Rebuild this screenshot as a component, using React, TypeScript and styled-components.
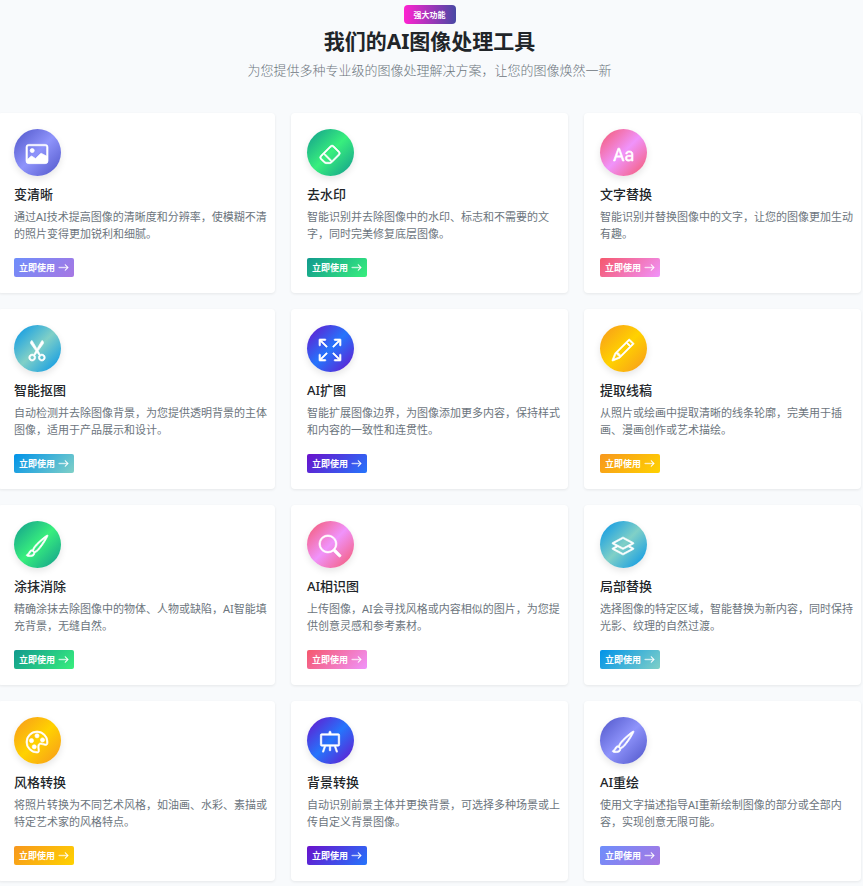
import React from "react";
import styled, { createGlobalStyle } from "styled-components";
import {
  BsArrowRight,
  BsArrowsFullscreen,
  BsBrush,
  BsEasel,
  BsEraser,
  BsImage,
  BsLayers,
  BsPalette,
  BsPencil,
  BsScissors,
  BsSearch,
  BsType,
} from "react-icons/bs";
import type { IconType } from "react-icons";

const GlobalStyle = createGlobalStyle`
  *, *::before, *::after { box-sizing: border-box; }
  body {
    margin: 0;
    background: #f8fafc;
    color: #212529;
    font-family: "Noto Sans", "Noto Sans CJK SC", sans-serif;
    overflow-x: hidden;
  }
`;

type Tone = "indigo" | "green" | "pink" | "cyan" | "violet" | "amber";

const tones: Record<Tone, { edge: string; core: string; from: string; to: string }> = {
  indigo: { edge: "#4e54c8", core: "#8f94fb", from: "#6e8efb", to: "#a777e3" },
  green: { edge: "#11998e", core: "#38ef7d", from: "#11998e", to: "#38ef7d" },
  pink: { edge: "#f5576c", core: "#f093fb", from: "#f5576c", to: "#f093fb" },
  cyan: { edge: "#0093e9", core: "#80d0c7", from: "#0093e9", to: "#80d0c7" },
  violet: { edge: "#6a11cb", core: "#2575fc", from: "#6a11cb", to: "#2575fc" },
  amber: { edge: "#f7971e", core: "#ffd200", from: "#f7971e", to: "#ffd200" },
};

const Section = styled.section`
  padding: 5px 2px 5px 0;
`;

const Header = styled.header`
  display: flex;
  flex-direction: column;
  align-items: center;
  margin-bottom: 33px;
  padding-right: 2px;
  text-align: center;
`;

const Badge = styled.span`
  padding: 0 10px;
  border-radius: 4px;
  background: linear-gradient(90deg, #ff22d0, #4848a4);
  color: #fff;
  font-size: 8px;
  font-weight: 700;
  line-height: 19px;
`;

const Heading = styled.h2`
  margin: 4px 0 6px;
  font-size: 21px;
  font-weight: 700;
  line-height: 26px;
`;

const Lead = styled.p`
  margin: 0;
  color: #6c757d;
  font-size: 13px;
  font-weight: 300;
  line-height: 20px;
`;

const Grid = styled.div`
  display: grid;
  grid-template-columns: repeat(3, minmax(0, 1fr));
  gap: 16px;
  margin-left: -2px;
`;

const Card = styled.article`
  display: flex;
  flex-direction: column;
  align-items: flex-start;
  padding: 16px 8px 16px 16px;
  border-radius: 4px;
  background: #fff;
  box-shadow: 0 1px 3px rgba(0, 0, 0, 0.08);
`;

const IconCircle = styled.div<{ $tone: Tone }>`
  display: flex;
  align-items: center;
  justify-content: center;
  width: 47px;
  height: 47px;
  margin-bottom: 10px;
  padding: 2px 1px 0 0;
  border-radius: 50%;
  background: linear-gradient(
    135deg,
    ${({ $tone }) => tones[$tone].edge} 0%,
    ${({ $tone }) => tones[$tone].core} 50%,
    ${({ $tone }) => tones[$tone].edge} 100%
  );
  box-shadow: 0 3px 7px rgba(0, 0, 0, 0.1);
  color: #fff;
  font-size: 22px;

  svg {
    stroke-width: 0.5;
    overflow: visible;
  }
`;

const CardTitle = styled.h3`
  margin: 0 0 6px;
  font-size: 13px;
  font-weight: 500;
  line-height: 16px;
`;

const CardText = styled.p`
  flex: 1;
  margin: 0 0 16px;
  color: #6c757d;
  font-size: 11px;
  line-height: 17px;
`;

const CardLink = styled.a<{ $tone: Tone }>`
  display: flex;
  align-items: center;
  gap: 3px;
  height: 19px;
  padding: 0 5px;
  border-radius: 2px;
  background: linear-gradient(135deg, ${({ $tone }) => tones[$tone].from}, ${({ $tone }) => tones[$tone].to});
  color: #fff;
  font-size: 9px;
  font-weight: 700;
  text-decoration: none;
`;

const LinkArrow = styled(BsArrowRight)`
  width: 11px;
  height: 11px;
  stroke-width: 0.6;
`;

interface Feature {
  title: string;
  text: string;
  icon: IconType;
  tone: Tone;
}

const features: Feature[] = [
  { title: "变清晰", text: "通过AI技术提高图像的清晰度和分辨率，使模糊不清的照片变得更加锐利和细腻。", icon: BsImage, tone: "indigo" },
  { title: "去水印", text: "智能识别并去除图像中的水印、标志和不需要的文字，同时完美修复底层图像。", icon: BsEraser, tone: "green" },
  { title: "文字替换", text: "智能识别并替换图像中的文字，让您的图像更加生动有趣。", icon: BsType, tone: "pink" },
  { title: "智能抠图", text: "自动检测并去除图像背景，为您提供透明背景的主体图像，适用于产品展示和设计。", icon: BsScissors, tone: "cyan" },
  { title: "AI扩图", text: "智能扩展图像边界，为图像添加更多内容，保持样式和内容的一致性和连贯性。", icon: BsArrowsFullscreen, tone: "violet" },
  { title: "提取线稿", text: "从照片或绘画中提取清晰的线条轮廓，完美用于插画、漫画创作或艺术描绘。", icon: BsPencil, tone: "amber" },
  { title: "涂抹消除", text: "精确涂抹去除图像中的物体、人物或缺陷，AI智能填充背景，无缝自然。", icon: BsBrush, tone: "green" },
  { title: "AI相识图", text: "上传图像，AI会寻找风格或内容相似的图片，为您提供创意灵感和参考素材。", icon: BsSearch, tone: "pink" },
  { title: "局部替换", text: "选择图像的特定区域，智能替换为新内容，同时保持光影、纹理的自然过渡。", icon: BsLayers, tone: "cyan" },
  { title: "风格转换", text: "将照片转换为不同艺术风格，如油画、水彩、素描或特定艺术家的风格特点。", icon: BsPalette, tone: "amber" },
  { title: "背景转换", text: "自动识别前景主体并更换背景，可选择多种场景或上传自定义背景图像。", icon: BsEasel, tone: "violet" },
  { title: "AI重绘", text: "使用文字描述指导AI重新绘制图像的部分或全部内容，实现创意无限可能。", icon: BsBrush, tone: "indigo" },
];

function FeatureCard({ title, text, icon: Icon, tone }: Feature) {
  return (
    <Card>
      <IconCircle $tone={tone}>
        <Icon aria-hidden />
      </IconCircle>
      <CardTitle>{title}</CardTitle>
      <CardText>{text}</CardText>
      <CardLink $tone={tone} href="#">
        立即使用
        <LinkArrow aria-hidden />
      </CardLink>
    </Card>
  );
}

export default function App() {
  return (
    <>
      <GlobalStyle />
      <Section lang="zh-CN">
        <Header>
          <Badge>强大功能</Badge>
          <Heading>我们的AI图像处理工具</Heading>
          <Lead>为您提供多种专业级的图像处理解决方案，让您的图像焕然一新</Lead>
        </Header>
        <Grid>
          {features.map((feature) => (
            <FeatureCard key={feature.title} {...feature} />
          ))}
        </Grid>
      </Section>
    </>
  );
}
